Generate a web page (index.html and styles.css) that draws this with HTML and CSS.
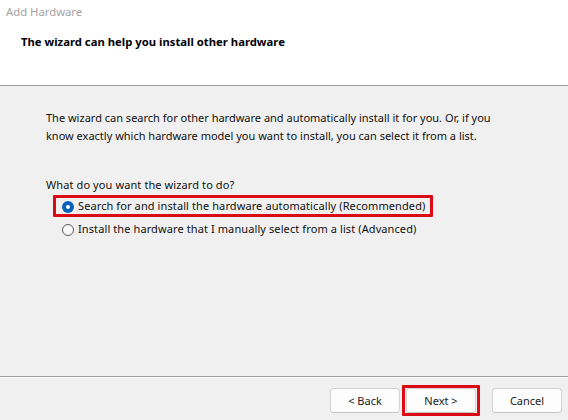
FILE: index.html
```html
<!DOCTYPE html>
<html>
<head>
<meta charset="utf-8">
<title>Add Hardware</title>
<link rel="stylesheet" href="styles.css">
</head>
<body>
<div class="window">
  <header class="header">
    <div class="app-title">Add Hardware</div>
    <h1 class="heading">The wizard can help you install other hardware</h1>
  </header>
  <main class="content">
    <p class="intro">The wizard can search for other hardware and automatically install it for you. Or, if you<br>know exactly which hardware model you want to install, you can select it from a list.</p>
    <p class="question">What do you want the wizard to do?</p>
    <div class="options">
      <label class="option highlight"><span class="radio checked"></span><span class="option-text">Search for and install the hardware automatically (Recommended)</span></label>
      <label class="option"><span class="radio"></span><span class="option-text">Install the hardware that I manually select from a list (Advanced)</span></label>
    </div>
  </main>
  <footer class="footer">
    <button class="btn btn-plain">&lt; Back</button>
    <div class="btn-highlight"><button class="btn">Next &gt;</button></div>
    <button class="btn btn-plain btn-cancel">Cancel</button>
  </footer>
</div>
</body>
</html>
```

FILE: styles.css
```css
* { box-sizing: border-box; }

html, body {
  margin: 0;
  padding: 0;
}

body {
  width: 568px;
  height: 420px;
  overflow: hidden;
  background: #f0f0f0;
  font-family: "Noto Sans", "Liberation Sans", sans-serif;
  font-size: 11px;
  color: #000;
}

.window {
  display: flex;
  flex-direction: column;
  height: 420px;
}

/* ---------- header ---------- */
.header {
  height: 86px;
  background: #fff;
  border-bottom: 1px solid #a0a0a0;
  padding: 4px 0 0 0;
}

.app-title {
  padding-left: 6px;
  font-size: 11.3px;
  line-height: 16px;
  color: #a2a2a2;
}

.heading {
  margin: 14px 0 0 21px;
  font-size: 11.3px;
  line-height: 16px;
  font-weight: bold;
  color: #000;
}

/* ---------- content ---------- */
.content {
  height: 291px;
  border-bottom: 1px solid #a0a0a0;
  padding: 23px 0 0 46px;
  display: flex;
  flex-direction: column;
  align-items: flex-start;
}

.intro {
  margin: 0;
  line-height: 18px;
  color: #111;
}

.question {
  margin: 31px 0 0 0;
  line-height: 18px;
  letter-spacing: 0.1px;
  color: #111;
}

.options {
  margin: 1px 0 0 7px;
  display: flex;
  flex-direction: column;
  align-items: flex-start;
  gap: 1px;
}

.option {
  display: flex;
  align-items: flex-start;
  height: 22px;
  border: 3px solid transparent;
  padding: 0 5px 0 6px;
  line-height: 16px;
  letter-spacing: 0.1px;
  color: #111;
}

.option.highlight {
  border-color: #dc0a14;
  border-radius: 1px;
}

.radio {
  flex: none;
  width: 12px;
  height: 12px;
  margin: 3px 4px 0 0;
  border-radius: 50%;
  border: 1px solid #5a5a5a;
  background: #f7f7f7;
  position: relative;
}

.radio.checked {
  border: none;
  background: #0a62b8;
}

.radio.checked::after {
  content: "";
  position: absolute;
  left: 4px;
  top: 4px;
  width: 4px;
  height: 4px;
  border-radius: 50%;
  background: #fff;
}

/* ---------- footer ---------- */
.footer {
  flex: 1;
  border-top: 1px solid #fff;
  display: flex;
  justify-content: flex-end;
  align-items: flex-start;
  padding: 7px 6px 0 0;
}

.btn {
  width: 70px;
  height: 25px;
  padding: 0;
  margin: 0;
  font-family: "Noto Sans", "Liberation Sans", sans-serif;
  font-size: 11px;
  line-height: 23px;
  color: #1b1b1b;
  background: #fdfdfd;
  border: 1px solid #d3d3d3;
  border-bottom-color: #c4c4c4;
  border-radius: 4px;
}

.btn-plain {
  margin-top: 3px;
}

.btn-highlight {
  margin-left: 2px;
  border: 3px solid #dc0a14;
  padding: 0 1px;
  border-radius: 1px;
  display: flex;
}

.btn-cancel {
  margin-left: 12px;
}
```
